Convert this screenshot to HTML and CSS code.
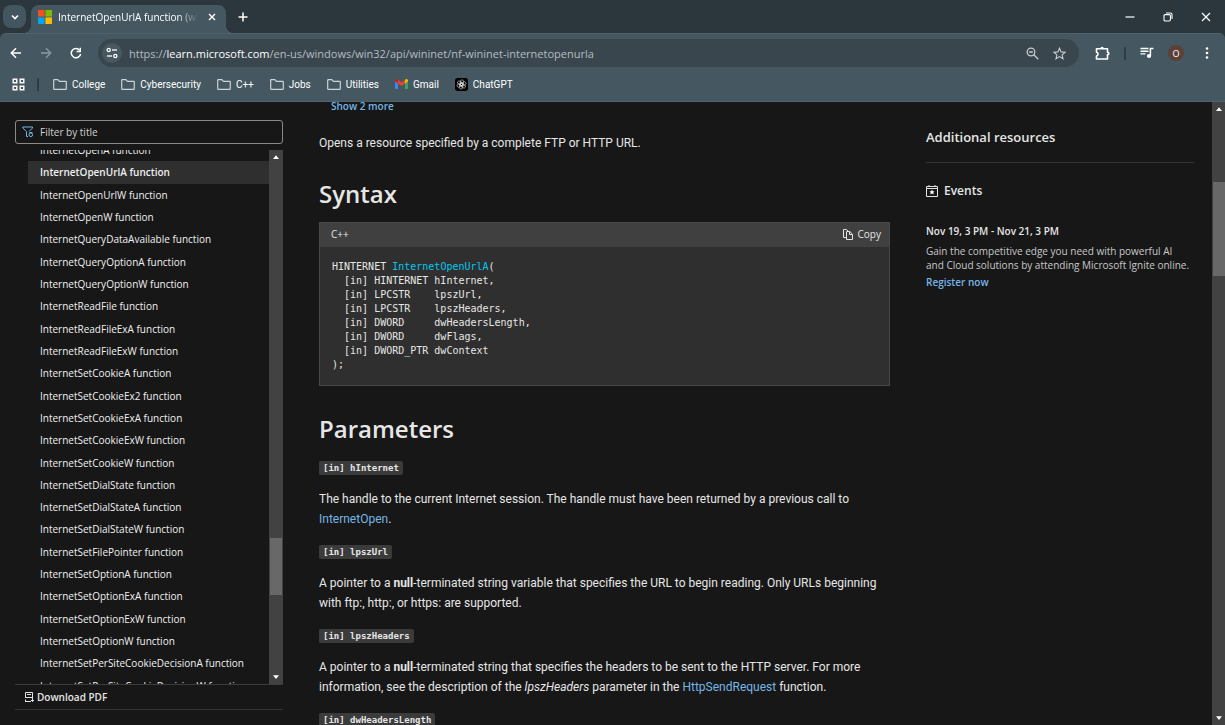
FILE: index.html
```html
<!DOCTYPE html>
<html lang="en">
<head>
  <meta charset="utf-8">
  <title>InternetOpenUrlA function (wininet.h)</title>
  <link rel="stylesheet" href="styles.css">
</head>
<body>
  <header class="browser">
    <div class="tab-strip">
      <button class="tab-search" aria-label="Search tabs">
        <svg width="10" height="10" viewBox="0 0 10 10"><path d="M2 3.5l3 3 3-3" fill="none" stroke="#fff" stroke-width="1.6"/></svg>
      </button>
      <div class="tab">
        <svg width="14" height="14" viewBox="0 0 14 14">
          <path fill="#f25022" d="M0 0h6.6v6.6H0z"/><path fill="#7fba00" d="M7.4 0H14v6.6H7.4z"/>
          <path fill="#00a4ef" d="M0 7.4h6.6V14H0z"/><path fill="#ffb900" d="M7.4 7.4H14V14H7.4z"/>
        </svg>
        <span class="tab-title">InternetOpenUrlA function (wininet.h)</span>
        <button class="icon-btn" aria-label="Close tab">
          <svg width="8" height="8" viewBox="0 0 8 8"><path d="M1 1l6 6M7 1L1 7" stroke="#fff" stroke-width="1.4"/></svg>
        </button>
      </div>
      <button class="icon-btn new-tab" aria-label="New tab">
        <svg width="10" height="10" viewBox="0 0 10 10"><path d="M5 .5v9M.5 5h9" stroke="#fff" stroke-width="1.5"/></svg>
      </button>
      <div class="window-controls">
        <button class="icon-btn" aria-label="Minimize">
          <svg width="10" height="10" viewBox="0 0 10 10"><path d="M.5 5h9" stroke="#fff" stroke-width="1.2"/></svg>
        </button>
        <button class="icon-btn" aria-label="Restore">
          <svg width="10" height="10" viewBox="0 0 10 10" fill="none" stroke="#fff" stroke-width="1.1"><rect x="1" y="2.6" width="6.4" height="6.4" rx="1.2"/><path d="M3 1h4.4Q9 1 9 2.6V7"/></svg>
        </button>
        <button class="icon-btn" aria-label="Close">
          <svg width="10" height="10" viewBox="0 0 10 10"><path d="M1 1l8 8M9 1L1 9" stroke="#fff" stroke-width="1.2"/></svg>
        </button>
      </div>
    </div>

    <div class="toolbar">
      <div class="nav-buttons">
        <button class="icon-btn" aria-label="Back">
          <svg width="12" height="12" viewBox="0 0 12 12"><path d="M11 6H1.5M6 1.3L1.3 6 6 10.7" fill="none" stroke="#fff" stroke-width="1.5"/></svg>
        </button>
        <button class="icon-btn" aria-label="Forward">
          <svg width="12" height="12" viewBox="0 0 12 12"><path d="M1 6h9.5M6 1.3L10.7 6 6 10.7" fill="none" stroke="#8c989f" stroke-width="1.4"/></svg>
        </button>
        <button class="icon-btn" aria-label="Reload">
          <svg width="12" height="12" viewBox="0 0 12 12"><path d="M10.6 7A4.7 4.7 0 1 1 9.7 3.2" fill="none" stroke="#fff" stroke-width="1.5"/><path d="M11 .8v4.4H6.6V3.8h3V.8z" fill="#fff"/></svg>
        </button>
      </div>
      <div class="address-bar">
        <button class="site-info" aria-label="View site information">
          <svg width="12" height="12" viewBox="0 0 12 12" fill="none" stroke="#fff" stroke-width="1.3"><circle cx="2.7" cy="3" r="1.6"/><path d="M6 3h5"/><circle cx="9.3" cy="9" r="1.6"/><path d="M1 9h5"/></svg>
        </button>
        <span class="url">https://<b>learn.microsoft.com</b>/en-us/windows/win32/api/wininet/nf-wininet-internetopenurla</span>
        <button class="icon-btn" aria-label="Zoom">
          <svg width="13" height="13" viewBox="0 0 13 13" fill="none" stroke="#c6cdd1" stroke-width="1.3"><circle cx="5" cy="5" r="3.8"/><path d="M3.2 5h3.6M7.8 7.8l4.4 4.4"/></svg>
        </button>
        <button class="icon-btn" aria-label="Bookmark this tab">
          <svg width="13" height="13" viewBox="0 0 13 13" fill="none" stroke="#c6cdd1" stroke-width="1.1"><path d="M6.5 1.2l1.6 3.7 4 .35-3 2.6.9 3.9-3.5-2.1L3 11.75l.9-3.9-3-2.6 4-.35z"/></svg>
        </button>
      </div>
      <div class="actions">
        <button class="icon-btn" aria-label="Extensions">
          <svg width="15" height="15" viewBox="0 0 15 15"><path d="M1.5 2.8h11v3.400c1.800 0 1.800 2.400 0 2.400v4.400h-11V10c2-.2 2-3.600 0-3.800z" fill="none" stroke="#fff" stroke-width="1.6" stroke-linejoin="round"/><path d="M5.400 2.500a1.700 1.700 0 0 1 3.400 0z" fill="#fff"/></svg>
        </button>
        <span class="divider"></span>
        <button class="icon-btn" aria-label="Media control">
          <svg width="14" height="12" viewBox="0 0 14 12"><path d="M.5 1.5h8M.5 4.200h8M.5 6.900h5" stroke="#fff" stroke-width="1.4"/><path d="M10.400 8.800V1.500h3" fill="none" stroke="#fff" stroke-width="1.5"/><circle cx="9" cy="9" r="2.100" fill="#fff"/></svg>
        </button>
        <button class="avatar" aria-label="Profile">O</button>
        <button class="icon-btn menu-btn" aria-label="Menu">
          <svg width="4" height="14" viewBox="0 0 4 14" fill="#fff"><circle cx="2" cy="2.5" r="1.300"/><circle cx="2" cy="7" r="1.300"/><circle cx="2" cy="11.500" r="1.300"/></svg>
        </button>
      </div>
    </div>

    <nav class="bookmarks">
      <button class="icon-btn" aria-label="Tab groups">
        <svg width="13" height="13" viewBox="0 0 13 13" fill="none" stroke="#fff" stroke-width="1.4"><path d="M1.200 1.200h3.600v3.600H1.200zM8.200 1.200h3.600v3.600H8.200zM1.200 8.200h3.600v3.600H1.200zM8.200 8.200h3.600v3.600H8.200z"/></svg>
      </button>
      <span class="divider"></span>
      <a class="bookmark" href="#"><svg class="folder" viewBox="0 0 14 11"><path d="M.7 1.2q0-.5.5-.5h3.6l1.6 1.6h6.400q.5 0 .5.5v7q0 .5-.5.5H1.200q-.5 0-.5-.5z"/></svg>College</a>
      <a class="bookmark" href="#"><svg class="folder" viewBox="0 0 14 11"><path d="M.7 1.2q0-.5.5-.5h3.6l1.6 1.6h6.400q.5 0 .5.5v7q0 .5-.5.5H1.200q-.5 0-.5-.5z"/></svg>Cybersecurity</a>
      <a class="bookmark" href="#"><svg class="folder" viewBox="0 0 14 11"><path d="M.7 1.2q0-.5.5-.5h3.6l1.6 1.6h6.400q.5 0 .5.5v7q0 .5-.5.5H1.200q-.5 0-.5-.5z"/></svg>C++</a>
      <a class="bookmark" href="#"><svg class="folder" viewBox="0 0 14 11"><path d="M.7 1.2q0-.5.5-.5h3.6l1.6 1.6h6.400q.5 0 .5.5v7q0 .5-.5.5H1.200q-.5 0-.5-.5z"/></svg>Jobs</a>
      <a class="bookmark" href="#"><svg class="folder" viewBox="0 0 14 11"><path d="M.7 1.2q0-.5.5-.5h3.6l1.6 1.6h6.400q.5 0 .5.5v7q0 .5-.5.5H1.200q-.5 0-.5-.5z"/></svg>Utilities</a>
      <a class="bookmark" href="#">
        <svg width="13" height="10" viewBox="0 0 13 10"><path fill="#4285f4" d="M0 1.5l3 2.2V10H1q-1 0-1-1z"/><path fill="#34a853" d="M13 1.5l-3 2.2V10h2q1 0 1-1z"/><path fill="#c5221f" d="M0 1.6Q.3-.6 2.3.3L3 .8v3.6L0 2.2z"/><path fill="#fbbc04" d="M13 1.6Q12.700-.6 10.700.3L10 .8v3.6l3-2.200z"/><path fill="#ea4335" d="M3 .8l3.500 2.700L10 .8v3.600L6.500 7 3 4.400z"/></svg>Gmail</a>
      <a class="bookmark" href="#">
        <svg width="13" height="13" viewBox="0 0 14 14"><rect width="14" height="14" rx="3" fill="#000"/><g fill="none" stroke="#e8e8e8" stroke-width=".6"><rect id="petal" x="5.800" y="2" width="3.400" height="6.400" rx="1.700"/><use href="#petal" transform="rotate(60 7 7)"/><use href="#petal" transform="rotate(120 7 7)"/><use href="#petal" transform="rotate(180 7 7)"/><use href="#petal" transform="rotate(240 7 7)"/><use href="#petal" transform="rotate(300 7 7)"/></g></svg>ChatGPT</a>
    </nav>
  </header>

  <div class="page">
    <aside class="sidebar">
      <div class="filter">
        <svg width="12" height="12" viewBox="0 0 12 12" fill="none" stroke="#75b6e7"><path d="M.8 1h9.700v1L7 5.500M.8 1v1l3.700 3.700V10.500H6"/><circle cx="8.800" cy="8.800" r="1.800"/><path d="M7.300 6.500l3.200.2"/></svg>
        <input type="text" placeholder="Filter by title" aria-label="Filter by title">
      </div>
      <div class="toc">
        <ul class="toc-list">
          <li><a href="#">InternetOpenA function</a></li>
          <li class="selected"><a href="#">InternetOpenUrlA function</a></li>
          <li><a href="#">InternetOpenUrlW function</a></li>
          <li><a href="#">InternetOpenW function</a></li>
          <li><a href="#">InternetQueryDataAvailable function</a></li>
          <li><a href="#">InternetQueryOptionA function</a></li>
          <li><a href="#">InternetQueryOptionW function</a></li>
          <li><a href="#">InternetReadFile function</a></li>
          <li><a href="#">InternetReadFileExA function</a></li>
          <li><a href="#">InternetReadFileExW function</a></li>
          <li><a href="#">InternetSetCookieA function</a></li>
          <li><a href="#">InternetSetCookieEx2 function</a></li>
          <li><a href="#">InternetSetCookieExA function</a></li>
          <li><a href="#">InternetSetCookieExW function</a></li>
          <li><a href="#">InternetSetCookieW function</a></li>
          <li><a href="#">InternetSetDialState function</a></li>
          <li><a href="#">InternetSetDialStateA function</a></li>
          <li><a href="#">InternetSetDialStateW function</a></li>
          <li><a href="#">InternetSetFilePointer function</a></li>
          <li><a href="#">InternetSetOptionA function</a></li>
          <li><a href="#">InternetSetOptionExA function</a></li>
          <li><a href="#">InternetSetOptionExW function</a></li>
          <li><a href="#">InternetSetOptionW function</a></li>
          <li><a href="#">InternetSetPerSiteCookieDecisionA function</a></li>
          <li><a href="#">InternetSetPerSiteCookieDecisionW function</a></li>
        </ul>
        <div class="scrollbar toc-scrollbar">
          <svg class="arrow" viewBox="0 0 8 5"><path d="M4 0l4 5H0z"/></svg>
          <div class="thumb"></div>
          <svg class="arrow" viewBox="0 0 8 5"><path d="M4 5l4-5H0z"/></svg>
        </div>
      </div>
      <div class="download">
        <button>
          <svg width="10" height="10" viewBox="0 0 10 10" fill="none" stroke="#e3e3e3"><path d="M1.500 5.500v-5h7v5M1 9.500h6M1.500 7.500v2M3 2.500h4M1 5.500h8M8.500 6v3.500M7 8l1.500 1.500L10 8"/></svg>
          Download PDF
        </button>
      </div>
    </aside>

    <main class="article">
      <button class="show-more">Show 2 more</button>
      <p>Opens a resource specified by a complete FTP or HTTP URL.</p>

      <h2>Syntax</h2>
      <div class="code-block">
        <div class="code-header">
          <span>C++</span>
          <button>
            <svg width="10" height="11" viewBox="0 0 10 11" fill="none" stroke="#e3e3e3"><path d="M3 8.500H.5v-8h3L5 2M3.500 2.500h3.300l2.700 2.700v5.300h-6zM6.500 2.500v3h3"/></svg>
            Copy
          </button>
        </div>
<pre><code>HINTERNET <span class="fn">InternetOpenUrlA</span>(
  [in] HINTERNET hInternet,
  [in] LPCSTR    lpszUrl,
  [in] LPCSTR    lpszHeaders,
  [in] DWORD     dwHeadersLength,
  [in] DWORD     dwFlags,
  [in] DWORD_PTR dwContext
);</code></pre>
      </div>

      <h2>Parameters</h2>
      <p><code>[in] hInternet</code></p>
      <p>The handle to the current Internet session. The handle must have been returned by a previous call to <a href="#">InternetOpen</a>.</p>
      <p><code>[in] lpszUrl</code></p>
      <p>A pointer to a <strong>null</strong>-terminated string variable that specifies the URL to begin reading. Only URLs beginning with ftp:, http:, or https: are supported.</p>
      <p><code>[in] lpszHeaders</code></p>
      <p>A pointer to a <strong>null</strong>-terminated string that specifies the headers to be sent to the HTTP server. For more information, see the description of the <em>lpszHeaders</em> parameter in the <a href="#">HttpSendRequest</a> function.</p>
      <p><code>[in] dwHeadersLength</code></p>
    </main>

    <aside class="resources">
      <h2>Additional resources</h2>
      <h3>
        <svg width="12" height="12" viewBox="0 0 12 12" fill="none" stroke="#e3e3e3"><path d="M.5 1.500h11v10H.5zM.5 3.500h11M3 0v1.500M9 0v1.500"/><path fill="#fff" stroke="none" d="M6 4.500l.8 1.700 1.800.2-1.300 1.200.4 1.900L6 8.600l-1.700.9.4-1.900-1.300-1.200 1.800-.2z"/></svg>
        Events
      </h3>
      <h4>Nov 19, 3 PM - Nov 21, 3 PM</h4>
      <p>Gain the competitive edge you need with powerful AI and Cloud solutions by attending Microsoft Ignite online.</p>
      <a href="#">Register now</a>
    </aside>

    <div class="scrollbar page-scrollbar">
      <svg class="arrow" viewBox="0 0 8 5"><path d="M4 0l4 5H0z"/></svg>
      <div class="thumb"></div>
      <svg class="arrow" viewBox="0 0 8 5"><path d="M4 5l4-5H0z"/></svg>
    </div>
  </div>
</body>
</html>
```
FILE: styles.css
```css
* {
  box-sizing: border-box;
}
body {
  margin: 0;
  height: 100vh;
  display: flex;
  flex-direction: column;
  overflow: hidden;
  background-color: #171717;
  color: #e6e6e6;
  font-family: "Open Sans", "Noto Sans", sans-serif;
  font-size: 10px;
}
h2, h3, h4, p, ul, pre {
  margin: 0;
  padding: 0;
}
button {
  padding: 0;
  border: none;
  background: none;
  color: inherit;
  font: inherit;
  cursor: pointer;
}
svg {
  display: block;
  flex-shrink: 0;
}
a {
  color: #75b6e7;
  text-decoration: none;
}

/* Browser window */
.browser {
  background-color: #2c373d;
  color: #fff;
}
.icon-btn {
  display: flex;
  align-items: center;
  justify-content: center;
}
.tab-strip {
  display: flex;
  align-items: center;
  height: 33px;
  padding-left: 3px;
}
.tab-search {
  display: flex;
  align-items: center;
  justify-content: center;
  width: 23px;
  height: 23px;
  border-radius: 8px;
  background-color: #435660;
}
.tab {
  position: relative;
  display: flex;
  align-items: center;
  align-self: flex-end;
  width: 195px;
  height: 28px;
  margin-left: 5px;
  padding: 0 10px 4px 7px;
  border-radius: 8px 8px 0 0;
  background-color: #455861;
}
/* Flared bottom corners of the tab */
.tab::before, .tab::after {
  content: "";
  position: absolute;
  bottom: 0;
  width: 8px;
  height: 8px;
}
.tab::before {
  left: -8px;
  background: radial-gradient(circle at 0 0, transparent 8px, #455861 8px);
}
.tab::after {
  right: -8px;
  background: radial-gradient(circle at 100% 0, transparent 8px, #455861 8px);
}
.tab-title {
  flex: 1;
  margin: 0 10px 0 6px;
  overflow: hidden;
  white-space: nowrap;
  mask-image: linear-gradient(to right, #000 85%, transparent);
}
.new-tab {
  margin-left: 12px;
}
.window-controls {
  display: flex;
  gap: 28px;
  margin-left: auto;
  padding-right: 14px;
}
.toolbar {
  display: flex;
  align-items: center;
  height: 35px;
  padding: 4px 16px 0 10px;
  border-top: 1px solid #50636d;
  border-radius: 6px 6px 0 0;
  background-color: #455861;
}
.nav-buttons {
  display: flex;
  gap: 18px;
}
.address-bar {
  display: flex;
  flex: 1;
  align-items: center;
  gap: 14px;
  height: 28px;
  margin: 0 16px;
  padding: 0 13px 0 4px;
  border-radius: 14px;
  background-color: #39464d;
}
.site-info {
  display: flex;
  align-items: center;
  justify-content: center;
  width: 20px;
  height: 20px;
  margin-right: -7px;
  border-radius: 50%;
  background-color: #475861;
}
.url {
  flex: 1;
  color: #b4bdc1;
  font-size: 11px;
}
.url b {
  color: #fff;
  font-weight: normal;
}
.actions {
  display: flex;
  align-items: center;
  gap: 14px;
}
.menu-btn {
  margin-left: 7px;
}
.divider {
  width: 2px;
  height: 13px;
  background-color: #2f3d44;
}
.avatar {
  width: 16px;
  height: 16px;
  border-radius: 50%;
  background-color: #5d4037;
  font-size: 9px;
}
.bookmarks {
  display: flex;
  align-items: center;
  height: 34px;
  padding: 0 0 1px 12px;
  border-bottom: 1px solid #50636d;
  background-color: #455861;
  font-family: Roboto, sans-serif;
}
.bookmarks .divider {
  margin-left: 12px;
  margin-right: -2px;
}
.bookmark {
  display: flex;
  align-items: center;
  gap: 5px;
  margin-left: 16px;
  color: #fff;
}
.folder {
  width: 14px;
  height: 11px;
  fill: none;
  stroke: #cdd3d6;
  stroke-width: 1.2;
}

/* Documentation page */
.page {
  display: flex;
  flex: 1;
  min-height: 0;
}
.sidebar {
  display: flex;
  flex-direction: column;
  flex-shrink: 0;
  width: 268px;
  margin: 18px 36px 15px 15px;
}
.filter {
  display: flex;
  align-items: center;
  gap: 6px;
  height: 24px;
  margin-bottom: 6px;
  padding: 0 6px;
  border: 1px solid #8a8a8a;
  border-radius: 3px;
}
.filter input {
  flex: 1;
  padding: 0;
  border: none;
  outline: none;
  background: none;
  color: #e6e6e6;
  font: inherit;
}
.filter input::placeholder {
  color: #d2d2d2;
}
.toc {
  display: flex;
  flex: 1;
  min-height: 0;
  overflow: hidden;
}
/* The list is scrolled, its first and last rows are cut off */
.toc-list {
  display: flex;
  flex: 1;
  flex-direction: column;
  margin: -11px 0 -13px 13px;
  list-style: none;
}
.toc-list li {
  display: flex;
  flex: 1;
  align-items: center;
  min-height: 0;
  padding-left: 12px;
}
.toc-list a {
  color: #f0f0f0;
  line-height: 16px;
  white-space: nowrap;
}
.toc-list .selected {
  background-color: #2f2f2f;
}
.toc-list .selected a {
  font-weight: 600;
}
.download {
  display: flex;
  height: 26px;
  padding-left: 9px;
  border-top: 1px solid #3b3b3b;
  border-bottom: 1px solid #333;
}
.download button {
  display: flex;
  align-items: center;
  gap: 3px;
  font-weight: 600;
}

/* Scrollbars */
.scrollbar {
  display: flex;
  flex-direction: column;
  flex-shrink: 0;
  align-items: center;
  padding: 5px 0;
  background-color: #424242;
}
.scrollbar .arrow {
  width: 6px;
  height: 4px;
  fill: #fff;
}
.scrollbar .thumb {
  align-self: stretch;
  margin: 0 1px auto;
  background-color: #686868;
}
.toc-scrollbar {
  width: 14px;
}
.toc-scrollbar .thumb {
  height: 57px;
  margin-top: 379px;
}
.page-scrollbar {
  width: 13px;
}
.page-scrollbar .thumb {
  height: 94px;
  margin-top: 71px;
  margin-right: 0;
}

/* Article */
.article {
  flex: 1;
  min-width: 0;
}
.article p {
  margin-bottom: 12px;
  font-family: Roboto, sans-serif;
  font-size: 12px;
  line-height: 20px;
}
.article h2 {
  margin: 25px 0 12px;
  font-size: 24px;
  font-weight: 600;
  line-height: 32px;
}
.show-more {
  display: block;
  margin: -4px 0 19px 12px;
  color: #75b6e7;
  font-weight: 600;
  line-height: 16px;
}
.article p code {
  padding: 2px 4px;
  border-radius: 2px;
  background-color: #3b3b3b;
  font-family: "DejaVu Sans Mono", monospace;
  font-size: 9px;
  font-weight: bold;
  line-height: 12px;
}
.code-block {
  margin-bottom: 27px;
  border: 1px solid #484848;
  background-color: #2f2f2f;
}
.code-header {
  display: flex;
  align-items: center;
  justify-content: space-between;
  height: 24px;
  padding: 0 8px 2px 11px;
  background-color: #404040;
}
.code-header button {
  display: flex;
  align-items: center;
  gap: 5px;
}
.code-block pre {
  padding: 13px 12px;
}
.code-block code {
  display: block;
  font-family: "DejaVu Sans Mono", monospace;
  font-size: 10px;
  line-height: 14px;
}
.code-block .fn {
  color: #00c8f0;
}

/* Additional resources */
.resources {
  flex-shrink: 0;
  width: 268px;
  margin: 26px 18px 0 36px;
}
.resources h2 {
  padding-bottom: 16px;
  border-bottom: 1px solid #333;
  font-size: 13px;
  font-weight: 600;
  line-height: 18px;
}
.resources h3 {
  display: flex;
  align-items: center;
  gap: 6px;
  margin: 20px 0 24px;
  font-size: 12px;
  font-weight: 600;
  line-height: 16px;
}
.resources h4 {
  margin-bottom: 5px;
  font-size: 10px;
  font-weight: 600;
  line-height: 16px;
}
.resources p {
  margin-bottom: 2px;
  padding-right: 4px;
  color: #c8c8c8;
  line-height: 14px;
}
.resources a {
  font-weight: 600;
  line-height: 16px;
}
```
